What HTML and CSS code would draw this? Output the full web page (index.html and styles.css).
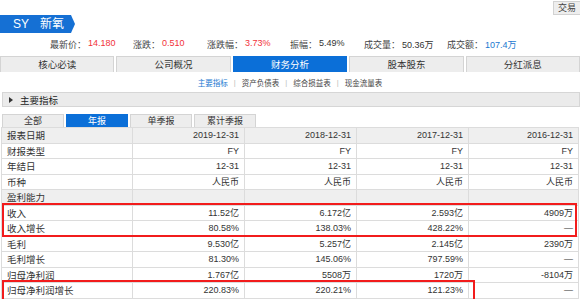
FILE: index.html
```html
<!DOCTYPE html>
<html lang="zh-CN">
<head>
  <meta charset="UTF-8" />
  <title>SY 新氧 - 财务分析</title>
  <link rel="stylesheet" href="styles.css">
</head>
<body>
  <div id="page">
    <div class="topbar">
      <a class="trade-btn" href="#">交易</a>
    </div>
    <div class="title-tag">SY<span class="title-name">新氧</span></div>

    <div class="stats">
      <div class="stat"><span class="stat-label">最新价：</span><span class="stat-value up">14.180</span></div>
      <div class="stat"><span class="stat-label">涨跌：</span><span class="stat-value up">0.510</span></div>
      <div class="stat"><span class="stat-label">涨跌幅：</span><span class="stat-value up">3.73%</span></div>
      <div class="stat"><span class="stat-label">振幅：</span><span class="stat-value">5.49%</span></div>
      <div class="stat"><span class="stat-label">成交量：</span><span class="stat-value">50.36万</span></div>
      <div class="stat"><span class="stat-label">成交额：</span><span class="stat-value blue">107.4万</span></div>
    </div>

    <div class="main-tabs">
      <a href="#">核心必读</a>
      <a href="#">公司概况</a>
      <a href="#" class="active">财务分析</a>
      <a href="#">股本股东</a>
      <a href="#">分红派息</a>
    </div>

    <div class="subnav">
      <a href="#" class="active">主要指标</a>
      <span class="sep">|</span>
      <a href="#">资产负债表</a>
      <span class="sep">|</span>
      <a href="#">综合损益表</a>
      <span class="sep">|</span>
      <a href="#">现金流量表</a>
    </div>

    <div class="section-head"><span class="arrow"></span>主要指标</div>

    <div class="period-tabs">
      <a href="#">全部</a>
      <a href="#" class="active">年报</a>
      <a href="#">单季报</a>
      <a href="#">累计季报</a>
    </div>

    <div class="table-wrap">
      <table class="fin-table">
        <tr class="head">
          <td>报表日期</td><td>2019-12-31</td><td>2018-12-31</td><td>2017-12-31</td><td>2016-12-31</td>
        </tr>
        <tr><td>财报类型</td><td>FY</td><td>FY</td><td>FY</td><td>FY</td></tr>
        <tr><td>年结日</td><td>12-31</td><td>12-31</td><td>12-31</td><td>12-31</td></tr>
        <tr><td>币种</td><td>人民币</td><td>人民币</td><td>人民币</td><td>人民币</td></tr>
        <tr class="group"><td>盈利能力</td><td></td><td></td><td></td><td></td></tr>
        <tr><td>收入</td><td>11.52亿</td><td>6.172亿</td><td>2.593亿</td><td>4909万</td></tr>
        <tr><td>收入增长</td><td>80.58%</td><td>138.03%</td><td>428.22%</td><td>—</td></tr>
        <tr><td>毛利</td><td>9.530亿</td><td>5.257亿</td><td>2.145亿</td><td>2390万</td></tr>
        <tr><td>毛利增长</td><td>81.30%</td><td>145.06%</td><td>797.59%</td><td>—</td></tr>
        <tr><td>归母净利润</td><td>1.767亿</td><td>5508万</td><td>1720万</td><td>-8104万</td></tr>
        <tr><td>归母净利润增长</td><td>220.83%</td><td>220.21%</td><td>121.23%</td><td>—</td></tr>
      </table>

      <!-- highlight boxes drawn over the table -->
      <div class="mark mark-revenue"></div>
      <div class="mark mark-profit"></div>
    </div>
  </div>
</body>
</html>
```

FILE: styles.css
```css
body {
  margin: 0;
  font-family: "Liberation Sans", "Noto Sans CJK SC", sans-serif;
  font-size: 9px;
  color: #333;
  background: #fff;
}

a {
  color: inherit;
  text-decoration: none;
}

#page {
  width: 580px;
  overflow: hidden;
}

/* Header */
.topbar {
  display: flex;
  justify-content: flex-end;
  height: 15px;
}

.trade-btn {
  margin-top: 1px;
  width: 26px;
  height: 12px;
  line-height: 12px;
  text-align: center;
  background: #eeeeee;
  border: 1px solid #d2d2d2;
  border-right: none;
  color: #444;
}

.title-tag {
  width: 62px;
  height: 18px;
  line-height: 18px;
  padding-left: 13px;
  background: #1570d4;
  color: #fff;
  font-size: 12px;
  clip-path: polygon(0 0, 71px 0, 75px 50%, 71px 100%, 0 100%);
}

.title-name {
  margin-left: 11px;
}

.stats {
  display: flex;
  align-items: center;
  height: 23px;
  padding-left: 50px;
}

.stat {
  display: flex;
}

.stat-label {
  color: #444;
}

.stat-value {
  width: 45px;
  padding-left: 2px;
  color: #333;
}

.stat-value.up {
  color: #f2323a;
}

.stat-value.blue {
  color: #1a78d0;
}

/* Main tabs */
.main-tabs {
  display: grid;
  grid-template-columns: repeat(5, 1fr);
  gap: 2px;
}

.main-tabs a {
  height: 15px;
  line-height: 15px;
  text-align: center;
  background: #ededed;
  border: 1px solid #d4d4d4;
  border-bottom: none;
  color: #333;
  font-size: 9.5px;
}

.main-tabs a.active {
  background: #0b6fd8;
  border-color: #0b6fd8;
  color: #fff;
}

/* Sub navigation */
.subnav {
  display: flex;
  justify-content: center;
  align-items: center;
  gap: 6px;
  height: 14px;
  margin-top: 3px;
  font-size: 7.5px;
  color: #444;
}

.subnav a.active {
  color: #1a78d0;
}

.subnav .sep {
  color: #bbb;
}

/* Section head */
.section-head {
  display: flex;
  align-items: center;
  height: 13px;
  margin: 3px 0 0 2px;
  padding-left: 6px;
  background: #ebebeb;
  border: 1px solid #d6d6d6;
  font-size: 9.5px;
  color: #222;
}

.section-head .arrow {
  width: 0;
  height: 0;
  margin-right: 7px;
  border-left: 4px solid #333;
  border-top: 3px solid transparent;
  border-bottom: 3px solid transparent;
}

/* Period tabs */
.period-tabs {
  display: flex;
  gap: 2px;
  margin: 7px 0 0 2px;
}

.period-tabs a {
  width: 60px;
  height: 12px;
  line-height: 12px;
  text-align: center;
  background: #ededed;
  border: 1px solid #d4d4d4;
  border-bottom: none;
  color: #333;
}

.period-tabs a.active {
  background: #0b6fd8;
  border-color: #0b6fd8;
  color: #fff;
}

/* Table */
.table-wrap {
  position: relative;
  margin-left: 1px;
}

.fin-table {
  width: 578px;
  border-collapse: collapse;
  table-layout: fixed;
}

.fin-table td {
  height: 14.5px;
  padding: 0 5px;
  border: 1px solid #dcdcdc;
  text-align: right;
  white-space: nowrap;
  color: #333;
}

.fin-table td:first-child {
  width: 120px;
  text-align: left;
  font-size: 9.5px;
}

.fin-table td:nth-child(2),
.fin-table td:nth-child(3),
.fin-table td:nth-child(4) {
  width: 101px;
}

.fin-table tr.head td,
.fin-table tr.group td {
  background: #efefef;
}

.mark {
  position: absolute;
  border: 2px solid #f21c1c;
  pointer-events: none;
}

.mark-revenue {
  left: 1px;
  top: 76px;
  width: 571px;
  height: 30px;
}

.mark-profit {
  left: 1px;
  top: 153px;
  width: 469px;
  height: 30px;
}
```
